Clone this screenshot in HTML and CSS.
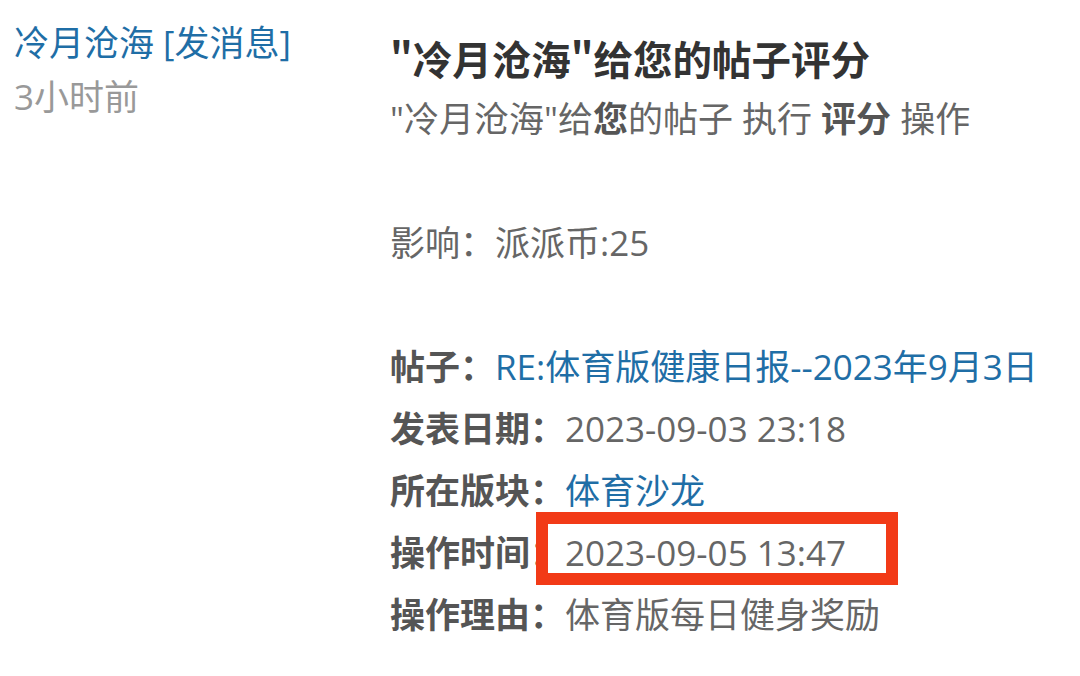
FILE: index.html
```html
<!DOCTYPE html>
<html lang="zh-CN">
<head>
    <meta charset="UTF-8">
    <meta name="viewport" content="width=device-width, initial-scale=1.0">
    <title>评分通知</title>
    <link rel="stylesheet" href="styles.css">
</head>
<body>
    <div class="notice">
        <div class="sender">
            <div class="sender-name"><a href="#">冷月沧海</a> <a href="#">[发消息]</a></div>
            <div class="sender-time">3小时前</div>
        </div>

        <div class="content">
            <h1>"冷月沧海"给您的帖子评分</h1>
            <div class="summary">"冷月沧海"给<b>您</b>的帖子 执行 <b>评分</b> 操作</div>

            <div class="effect">影响：派派币:25</div>

            <div class="details">
                <div class="row"><b>帖子：</b><a href="#">RE:体育版健康日报--2023年9月3日</a></div>
                <div class="row"><b>发表日期：</b>2023-09-03 23:18</div>
                <div class="row"><b>所在版块：</b><a href="#">体育沙龙</a></div>
                <div class="row"><b>操作时间：</b><span class="marked">2023-09-05 13:47</span></div>
                <div class="row"><b>操作理由：</b>体育版每日健身奖励</div>
            </div>
        </div>
    </div>
</body>
</html>
```

FILE: styles.css
```css
body {
    margin: 0;
    background: #fff;
    font-family: "Open Sans", "Noto Sans CJK SC", sans-serif;
    color: #666;
}
a {
    color: #1f6ea6;
    text-decoration: none;
}
.notice {
    display: flex;
}
.sender {
    width: 376px;
    padding: 16px 0 0 14px;
    font-size: 35px;
    line-height: 54px;
}
.sender-time {
    color: #999;
}
.content {
    padding-top: 28px;
    font-size: 35px;
    line-height: 62px;
}
h1 {
    margin: 0;
    font-family: "Noto Sans CJK SC", sans-serif;
    font-size: 39.5px;
    line-height: 60px;
    color: #333;
}
.summary b {
    color: #555;
}
.effect {
    margin-top: 62px;
}
.details {
    margin-top: 62px;
}
.row b {
    color: #555;
}
.marked {
    position: relative;
}
.marked::after {
    content: "";
    position: absolute;
    left: -29px;
    right: -52px;
    top: -17px;
    height: 49px;
    border: 12px solid #f23a17;
}
```
